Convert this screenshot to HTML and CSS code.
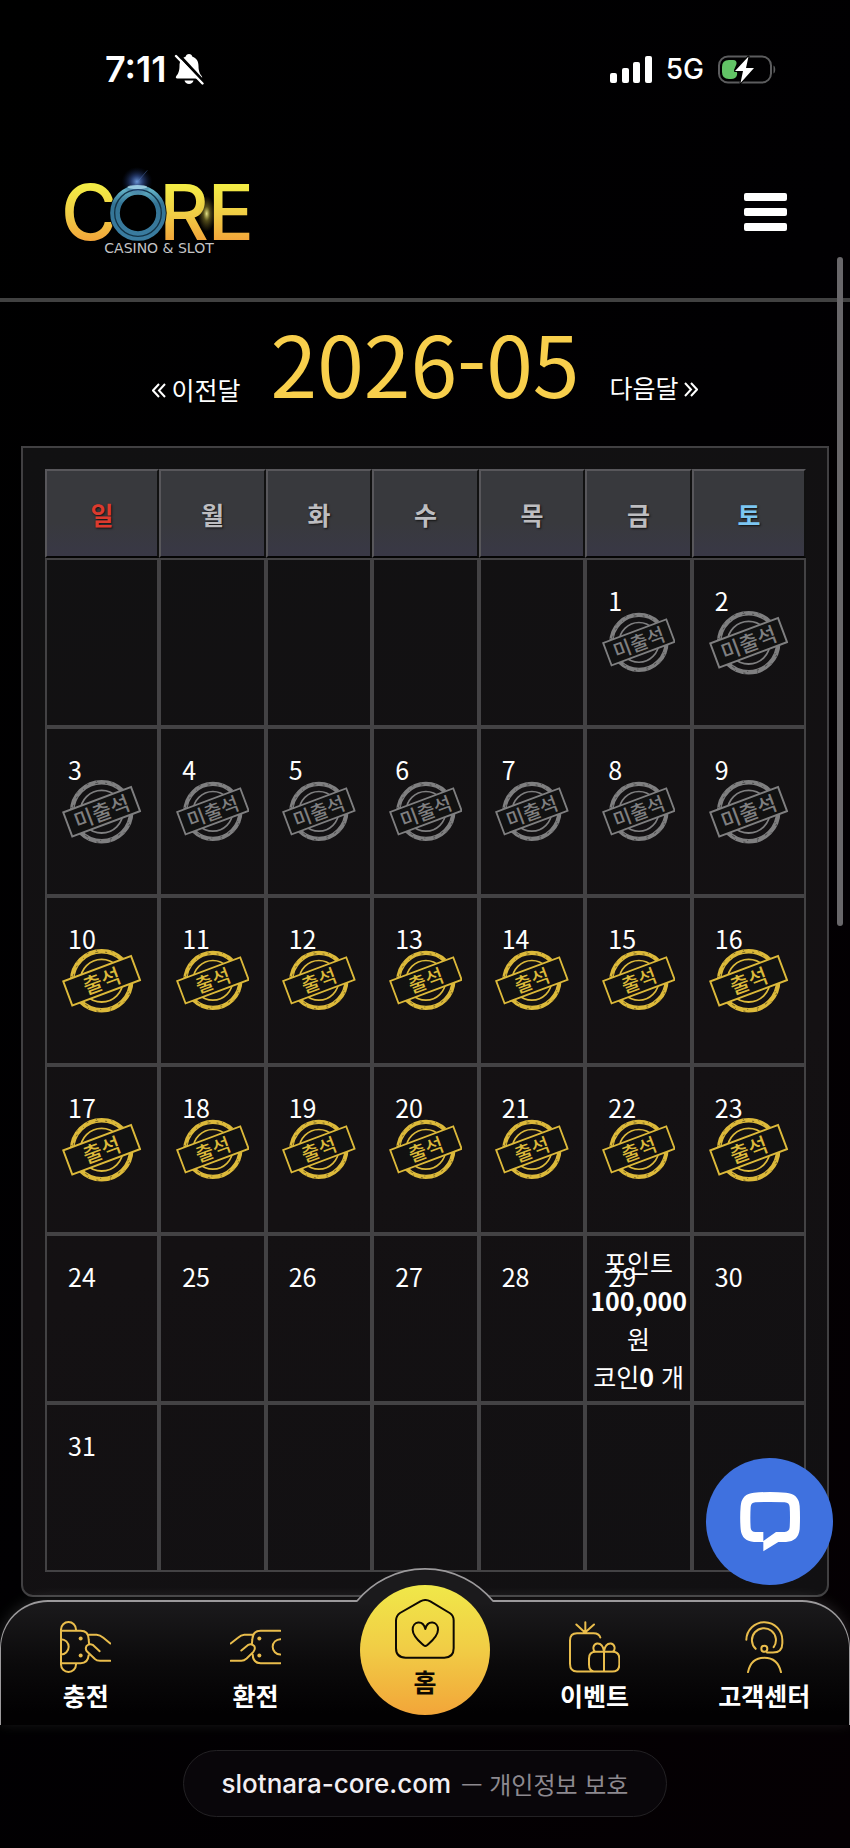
FILE: index.html
```html
<!DOCTYPE html>
<html lang="ko">
<head>
<meta charset="utf-8">
<meta name="viewport" content="width=device-width, initial-scale=1">
<title>CORE 출석부</title>
<link rel="stylesheet" href="styles.css">
</head>
<body>
<svg class="defs" aria-hidden="true">
  <defs>
    <g id="seal">
      <circle r="29.800" fill="none" stroke="currentColor" stroke-width="4.600"/>
      <circle r="29" fill="none" stroke="#111" stroke-width=".9" stroke-dasharray="2 9 1 13 3 7" opacity=".6"/>
      <circle r="31" fill="none" stroke="#111" stroke-width=".9" stroke-dasharray="1 12 2 8 1 15" opacity=".6"/>
      <circle r="21.500" fill="none" stroke="currentColor" stroke-width="1.800"/>
      <rect x="-36.500" y="-13" width="73" height="26" fill="#111" stroke="currentColor" stroke-width="2" transform="rotate(-20.500)"/>
    </g>
    <symbol id="absent" viewBox="-40 -34 80 68">
      <use href="#seal"/>
      <text class="seal-text" y="8" transform="rotate(-20.500)">미출석</text>
    </symbol>
    <symbol id="present" viewBox="-40 -34 80 68">
      <use href="#seal"/>
      <text class="seal-text" y="8" transform="rotate(-20.500)">출석</text>
    </symbol>
  </defs>
</svg>

<div class="status">
  <div class="status-side start">
    <span class="clock">7:11</span>
    <svg width="30" height="32" viewBox="0 0 30 32" aria-label="무음">
      <path d="M15 1c1.900 0 3 1.200 3.200 2.600 4.300 1.400 6.300 5 6.300 9.400 0 5.500 1.500 8 3.300 10.200.8 1 .3 2.300-1 2.300H3.200c-1.300 0-1.800-1.300-1-2.300C4 21 5.500 18.500 5.500 13c0-4.400 2-8 6.300-9.400C12 2.200 13.100 1 15 1z" fill="#fff"/>
      <path d="M10.500 27.500h9c-.6 2.200-2.200 3.500-4.500 3.500s-3.900-1.300-4.500-3.500z" fill="#fff"/>
      <path d="M4.500 1.500L30 29" stroke="#000" stroke-width="3"/>
      <path d="M2 3l26.500 27.500" stroke="#fff" stroke-width="2.400" stroke-linecap="round"/>
    </svg>
  </div>
  <div class="status-side">
    <svg width="42" height="27" viewBox="0 0 42 27" fill="#fff" aria-label="신호">
      <rect y="17" width="7" height="10" rx="2"/><rect x="12" y="12" width="7" height="15" rx="2"/><rect x="23" y="6" width="7" height="21" rx="2"/><rect x="35" width="7" height="27" rx="2"/>
    </svg>
    <span class="network">5G</span>
    <svg width="58" height="29" viewBox="0 0 58 29" aria-label="배터리">
      <rect x="1" y="1.500" width="52" height="26" rx="9" fill="none" stroke="#5c5c5e" stroke-width="2"/>
      <path d="M55.500 10.500c2.300.8 2.300 7.200 0 8z" fill="#5c5c5e"/>
      <path d="M11 5h4q4 0 3.500 4L16 15q4 1 3 5t-6 4h-2q-7 0-7-7v-5q0-7 7-7z" fill="#62c466"/>
      <path d="M30.500 1.500L17 16h8l-2.500 12L36 13h-8z" fill="#fff" stroke="#000" stroke-width="2" paint-order="stroke" stroke-linejoin="round"/>
    </svg>
  </div>
</div>

<header class="header">
  <a class="logo" href="#" aria-label="CORE CASINO &amp; SLOT">
    <svg width="190" height="88" viewBox="72 45 570 264">
      <defs>
        <linearGradient id="gold" gradientUnits="userSpaceOnUse" x1="0" y1="103" x2="0" y2="268"><stop offset="0" stop-color="#f3ec45"/><stop offset=".55" stop-color="#f0cb45"/><stop offset="1" stop-color="#f3a63a"/></linearGradient>
        <linearGradient id="ring" x1="0" y1="0" x2="0" y2="1"><stop offset="0" stop-color="#63b2c6"/><stop offset=".3" stop-color="#337394"/><stop offset="1" stop-color="#3a7ca0"/></linearGradient>
        <radialGradient id="flare"><stop offset="0" stop-color="#79a8ee" stop-opacity=".9"/><stop offset=".4" stop-color="#3a5cac" stop-opacity=".6"/><stop offset="1" stop-color="#10204a" stop-opacity="0"/></radialGradient>
        <radialGradient id="spark"><stop offset="0" stop-color="#fdfb9a" stop-opacity=".9"/><stop offset=".4" stop-color="#e8d84a" stop-opacity=".35"/><stop offset="1" stop-color="#c0a030" stop-opacity="0"/></radialGradient>
      </defs>
      <g class="wordmark" fill="url(#gold)">
        <text x="63" y="267">C</text>
        <text x="358" y="267">R</text>
        <text x="503" y="267">E</text>
      </g>
      <circle cx="294" cy="186" r="86" fill="#000"/>
      <circle cx="294" cy="186" r="69" fill="none" stroke="url(#ring)" stroke-width="29"/>
      <circle cx="294" cy="186" r="70" fill="none" stroke="#123347" stroke-width="4"/>
      <ellipse cx="291" cy="92" rx="46" ry="44" fill="url(#flare)"/>
      <path d="M286 100L322 58" stroke="#5a83c8" stroke-width="2" opacity=".6"/>
      <ellipse cx="292" cy="108" rx="30" ry="6" fill="#b8e8f4" opacity=".7"/>
      <ellipse cx="500" cy="188" rx="26" ry="54" fill="url(#spark)"/>
      <text class="tagline" x="357" y="306">CASINO &amp; SLOT</text>
    </svg>
  </a>
  <button class="menu" aria-label="메뉴"><span></span><span></span><span></span></button>
</header>

<main>
  <div class="month">
    <a href="#"><svg class="chevrons" viewBox="0 0 14 15"><path d="M7 1L1 7.500L7 14M13 1L7 7.500L13 14"/></svg>이전달</a>
    <h1>2026-05</h1>
    <a href="#">다음달<svg class="chevrons" viewBox="0 0 14 15"><path d="M1 1L7 7.500L1 14M7 1L13 7.500L7 14"/></svg></a>
  </div>
  <section class="panel">
    <table class="calendar">
      <colgroup><col class="edge"><col><col><col><col><col><col class="edge"></colgroup>
      <thead><tr><th class="sun">일</th><th>월</th><th>화</th><th>수</th><th>목</th><th>금</th><th class="sat">토</th></tr></thead>
      <tbody id="days"></tbody>
    </table>
  </section>
</main>

<nav class="tabs">
  <svg class="bump" width="140" height="36" viewBox="0 0 140 36" aria-hidden="true">
    <path d="M0 36V34H1.500A88 88 0 0 1 138.500 34H140V36z" fill="#1b1a1c"/>
    <path d="M0 33H2A88 88 0 0 1 138 33H140" fill="none" stroke="#9c9a9c" stroke-width="1.700"/>
  </svg>
  <a href="#">
    <svg class="icon" viewBox="0 0 153 155"><path d="M3 25V130M3 25a22 22 0 0 1 45 0v4M3 130a22 22 0 0 0 45 0v-4M3 29H62Q85 29 86 54L87 66M3 126H62Q84 126 86 102M3 54A23 23 0 0 1 3 100M84 41H110Q120 42 130 50L151 67M119 90L98 71Q88 66 80 74Q74 84 82 92L104 113Q110 119 120 119H151"/><circle cx="62" cy="52" r="6"/><circle cx="62" cy="103" r="6"/></svg>
    <span>충전</span>
  </a>
  <a href="#">
    <svg class="icon" viewBox="0 0 153 155"><path d="M151 29H92Q68 29 67 54L66 66M151 126H92Q69 126 68 100M151 54A23 23 0 0 0 151 100M69 41H43Q33 42 24 50L2 67M34 88L55 71Q65 66 73 75Q77 84 70 92L50 112Q42 119 34 119H2"/><circle cx="88" cy="52" r="6"/><circle cx="88" cy="103" r="6"/></svg>
    <span>환전</span>
  </a>
  <a class="home" href="#">
    <svg class="icon" viewBox="0 0 180 180"><path d="M76 7Q91 -1 106 7L164 42Q176 50 176 64V148Q176 176 148 176H32Q3 176 3 148V64Q4 50 15 42ZM91 90C84 62 53 66 53 92C53 112 74 128 86 139Q91 143 96 139C108 128 129 112 129 92C129 66 98 62 91 90Z"/></svg>
    <span>홈</span>
  </a>
  <a href="#">
    <svg class="icon" viewBox="0 0 153 155"><path d="M94 49Q90 36 74 36H24Q3 36 3 58V128Q3 151 24 151H130Q151 151 151 130V112Q151 92 130 92H80Q60 92 60 112V130Q60 148 74 151M49 3V34M22 10L48 34L75 10M105 92V150M105 90C102 72 94 66 84 67C72 70 70 84 78 92M105 90C108 72 116 66 126 67C138 70 140 84 132 92"/></svg>
    <span>이벤트</span>
  </a>
  <a href="#">
    <svg class="icon" viewBox="0 0 153 155"><path d="M22 56A54 54 0 0 1 130 58V66Q130 94 102 94H84M50 83A36 36 0 1 1 104 78M27 153Q36 110 76 110Q116 110 126 153"/><circle class="ring" cx="76" cy="83" r="9"/></svg>
    <span>고객센터</span>
  </a>
</nav>

<footer class="browser">
  <div class="address"><span class="host">slotnara-core.com</span><span>— 개인정보 보호</span></div>
</footer>

<button class="chat" aria-label="채팅">
  <svg width="60" height="60" viewBox="0 0 180 180"><path fill="#fff" fill-rule="evenodd" d="M42 2Q91 -2 138 2Q176 5 179 42Q181 76 179 112Q175 148 138 150H115L70 178V150H42Q5 147 2 112Q-1 76 2 42Q5 5 42 2ZM46 31Q33 32 32 45Q30 76 32 108Q34 120 46 120H70V147L108 120H134Q148 119 149 106Q151 76 149 45Q148 32 134 31Q90 29 46 31Z"/></svg>
</button>
<div class="scroll-thumb"></div>
<script src="calendar.js"></script>
</body>
</html>
```

FILE: styles.css
```css
* { box-sizing: border-box; }

body {
  position: relative;
  margin: 0;
  background: linear-gradient(120deg, #000 0%, #010002 50%, #050003 100%);
  color: #fff;
  font-family: "Noto Sans CJK KR", sans-serif;
  font-size: 25px;
  line-height: 38px;
}

a { color: inherit; text-decoration: none; }
button { border: 0; padding: 0; cursor: pointer; }
svg { display: block; }
.defs { position: absolute; width: 0; height: 0; }

.status {
  display: flex;
  justify-content: space-between;
  align-items: center;
  height: 122px;
  padding: 16px 74px 0 105px;
  font-family: Inter, sans-serif;
}
.status-side { display: flex; align-items: center; gap: 14px; }
.status-side.start { gap: 8px; }
.clock { font-size: 36px; font-weight: 600; }
.network { font-size: 28px; font-weight: 500; }

.header {
  display: flex;
  justify-content: space-between;
  align-items: center;
  height: 180px;
  padding: 0 63px 0 64px;
  border-bottom: 4px solid #414141;
}
.logo svg { overflow: visible; }
.wordmark { font: 500 230px Inter, sans-serif; }
.tagline { font: 400 42px "DejaVu Sans", sans-serif; fill: #c4c4c6; text-anchor: middle; }
.menu { display: flex; flex-direction: column; gap: 7px; margin-top: 3px; background: none; }
.menu span { width: 43px; height: 8px; border-radius: 2px; background: #fff; }

.month {
  display: flex;
  justify-content: center;
  align-items: baseline;
  gap: 30px;
  margin-bottom: 25px;
}
.month a { display: flex; align-items: center; gap: 6px; }
.chevrons {
  width: 14px;
  height: 15px;
  margin-top: 4px;
  fill: none;
  stroke: #fff;
  stroke-width: 2;
}
.month h1 {
  margin: 0;
  color: #f8cf4c;
  font-size: 84px;
  font-weight: 400;
  line-height: 119px;
}

.panel {
  margin: 0 21px;
  padding: 21px 21px 23px 22px;
  border: 2px solid #414042;
  border-radius: 0 0 12px 12px;
  background: linear-gradient(160deg, #111112, #141113 60%, #111012);
}
.calendar {
  width: 100%;
  table-layout: fixed;
  border-collapse: separate;
  border-spacing: 0;
}
.calendar .edge { width: 15%; }
.calendar th {
  height: 89px;
  padding: 0;
  border: 2px solid;
  border-color: #58575b #111 #050505 #58575b;
  background: linear-gradient(#38393d 60%, #393846);
  color: #bdbdc0;
  font-weight: 700;
  line-height: 36px;
  text-shadow: 1px 1px 2px #111;
}
.calendar th.sun { color: #dc3a2e; }
.calendar th.sat { color: #7cc6f2; }
.calendar td {
  position: relative;
  height: 169px;
  padding: 0;
  border: 2px solid #434244;
  text-align: center;
  word-break: keep-all;
}
.day { position: absolute; top: 21px; left: 21px; }
.stamp { width: 72%; margin: 0 auto; }
.stamp.absent { color: #7f7f80; }
.stamp.present { color: #dcb93a; }
.seal-text { font: 500 21px "Noto Sans CJK KR", sans-serif; fill: currentColor; text-anchor: middle; }

.tabs {
  position: relative;
  display: grid;
  grid-template-columns: repeat(5, 1fr);
  height: 125px;
  margin-top: 3px;
  border: solid #9c9a9c;
  border-width: 2px 1px 0;
  border-radius: 48px 48px 0 0;
  background: linear-gradient(#1b1a1c, #0b0a0b 50%, #020102 90%);
  box-shadow: 0 -2px 14px rgba(255, 255, 255, .12);
  font-weight: 700;
}
.tabs a {
  position: relative;
  display: flex;
  flex-direction: column;
  align-items: center;
  gap: 3px;
  padding-top: 19px;
}
.bump { position: absolute; top: -34px; left: 50%; margin-left: -70px; }
.icon { width: 51px; height: 52px; fill: none; stroke: #e9bd4c; stroke-width: 6; stroke-linecap: round; stroke-linejoin: round; }
.icon circle { fill: #e9bd4c; stroke: none; }
.icon .ring { fill: none; stroke: #e9bd4c; }
.tabs .home {
  justify-self: center;
  width: 130px;
  height: 130px;
  margin-top: -17px;
  padding-top: 14px;
  border-radius: 50%;
  background: linear-gradient(#f0e849, #f1cc45 50%, #f2a539);
  color: #0d0903;
}
.home .icon { width: 60px; height: 60px; stroke: #0d0903; }

.browser { display: flex; justify-content: center; padding: 25px 0 30px; }
.address {
  display: flex;
  align-items: center;
  gap: 10px;
  height: 67px;
  padding: 0 38px;
  border: 1px solid #232124;
  border-radius: 34px;
  background: #09060a;
  color: #8d898f;
  font-size: 24px;
}
.host { color: #f2eef2; font: 500 26px Inter, sans-serif; }

.chat {
  position: absolute;
  right: 17px;
  bottom: 262px;
  display: grid;
  place-items: center;
  width: 127px;
  height: 127px;
  border-radius: 50%;
  background: #3f71df;
}
.scroll-thumb {
  position: absolute;
  top: 257px;
  right: 7px;
  width: 6px;
  height: 669px;
  border-radius: 3px;
  background: #69676a;
}
```

FILE: calendar.js
```js
const FIRST_WEEKDAY = 5;
const DAYS_IN_MONTH = 31;
const rewards = { 29: '포인트 <b>100,000</b> 원<br>코인<b>0</b> 개' };

function stampFor(day) {
  if (day > 23) return '';
  const kind = day < 10 ? 'absent' : 'present';
  return `<svg class="stamp ${kind}" viewBox="-40 -34 80 68"><use href="#${kind}" x="-40" y="-34" width="80" height="68"/></svg>`;
}

const body = document.getElementById('days');
for (let week = 0; week < 6; week++) {
  const row = body.insertRow();
  for (let weekday = 0; weekday < 7; weekday++) {
    const cell = row.insertCell();
    const day = week * 7 + weekday - FIRST_WEEKDAY + 1;
    if (day < 1 || day > DAYS_IN_MONTH) continue;
    cell.innerHTML = `<span class="day">${day}</span>${stampFor(day)}${rewards[day] || ''}`;
  }
}
```
